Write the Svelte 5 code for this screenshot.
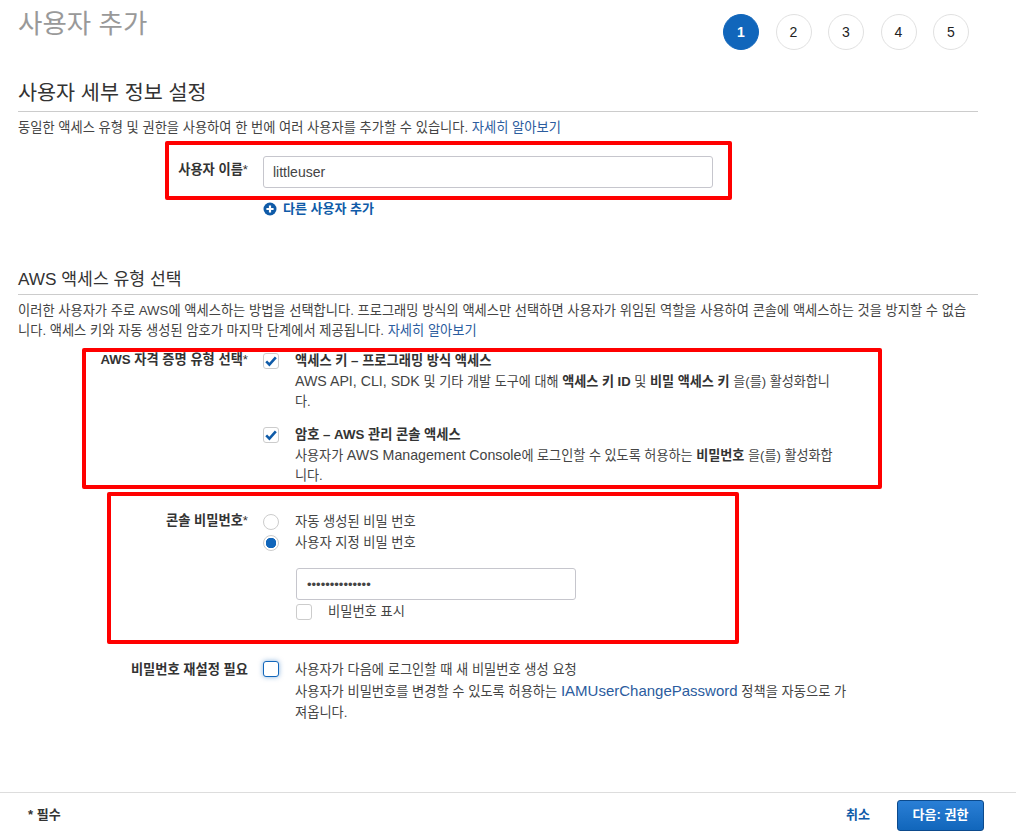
<script>
  let userName = 'littleuser'
  let password = 'passwordpasswo'
  const steps = [1, 2, 3, 4, 5]
</script>

<div class="page">
  <header class="top">
    <h1>사용자 추가</h1>
    <ol class="steps">
      {#each steps as step}
        <li class:current={step === 1}>{step}</li>
      {/each}
    </ol>
  </header>

  <section class="details">
    <h2>사용자 세부 정보 설정</h2>
    <p class="desc">동일한 액세스 유형 및 권한을 사용하여 한 번에 여러 사용자를 추가할 수 있습니다. <a href="#more">자세히 알아보기</a></p>

    <div class="row name-row">
      <div class="label">사용자 이름<span class="req">*</span></div>
      <input class="text name-input" type="text" value={userName} />
    </div>
    <a class="add-user" href="#add">
      <svg width="14" height="14" viewBox="0 0 14 14">
        <circle cx="7" cy="7" r="6.5" fill="#0f5ba8" />
        <path d="M7 3.4v7.2M3.4 7h7.2" stroke="#fff" stroke-width="2.2" />
      </svg>
      다른 사용자 추가
    </a>
  </section>

  <section class="access">
    <h2>AWS 액세스 유형 선택</h2>
    <p class="desc wide">이러한 사용자가 주로 AWS에 액세스하는 방법을 선택합니다. 프로그래밍 방식의 액세스만 선택하면 사용자가 위임된 역할을 사용하여 콘솔에 액세스하는 것을 방지할 수 없습니다. 액세스 키와 자동 생성된 암호가 마지막 단계에서 제공됩니다. <a href="#more">자세히 알아보기</a></p>

    <div class="row cred-row">
      <div class="label">AWS 자격 증명 유형 선택<span class="req">*</span></div>
      <div class="options">
        <div class="option">
          <span class="check">
            <svg width="14" height="12" viewBox="0 0 14 12"><path d="M2.2 6.4 5.4 9.6 11.8 2.4" fill="none" stroke="#0f5ba8" stroke-width="2.6" /></svg>
          </span>
          <div class="option-text">
            <strong>액세스 키 – 프로그래밍 방식 액세스</strong>
            <p><span class="en">AWS API, CLI, SDK</span> 및 기타 개발 도구에 대해 <b>액세스 키 ID</b> 및 <b>비밀 액세스 키</b> 을(를) 활성화합니다.</p>
          </div>
        </div>
        <div class="option">
          <span class="check">
            <svg width="14" height="12" viewBox="0 0 14 12"><path d="M2.2 6.4 5.4 9.6 11.8 2.4" fill="none" stroke="#0f5ba8" stroke-width="2.6" /></svg>
          </span>
          <div class="option-text">
            <strong>암호 – AWS 관리 콘솔 액세스</strong>
            <p>사용자가 <span class="en">AWS Management Console</span>에 로그인할 수 있도록 허용하는 <b>비밀번호</b> 을(를) 활성화합니다.</p>
          </div>
        </div>
      </div>
    </div>

    <div class="row pw-row">
      <div class="label">콘솔 비밀번호<span class="req">*</span></div>
      <div class="pw-options">
        <div class="radio-line"><span class="radio"></span>자동 생성된 비밀 번호</div>
        <div class="radio-line"><span class="radio on"></span>사용자 지정 비밀 번호</div>
        <input class="text pw-input" type="password" value={password} />
        <div class="show-pw"><span class="check"></span>비밀번호 표시</div>
      </div>
    </div>

    <div class="row reset-row">
      <div class="label">비밀번호 재설정 필요</div>
      <span class="check focused"></span>
      <div class="reset-text">
        <div>사용자가 다음에 로그인할 때 새 비밀번호 생성 요청</div>
        <p>사용자가 비밀번호를 변경할 수 있도록 허용하는 <a class="policy" href="#policy">IAMUserChangePassword</a> 정책을 자동으로 가져옵니다.</p>
      </div>
    </div>
  </section>

  <footer class="foot">
    <span class="required-note">* 필수</span>
    <a class="cancel" href="#cancel">취소</a>
    <button class="next" type="button">다음: 권한</button>
  </footer>

  <!-- red annotation boxes drawn over the form -->
  <div class="mark mark-name"></div>
  <div class="mark mark-cred"></div>
  <div class="mark mark-pw"></div>
</div>

<style>
  :global(body) {
    margin: 0;
    background: #fff;
  }

  .page {
    position: relative;
    width: 1016px;
    height: 837px;
    overflow: hidden;
    font-family: "Liberation Sans", "Noto Sans CJK KR", sans-serif;
    font-size: 13.25px;
    line-height: 20px;
    color: #444;
  }

  a {
    color: #2b5c9e;
    text-decoration: none;
  }

  p {
    margin: 0;
  }

  .en {
    font-size: 14.2px;
  }

  .policy {
    font-size: 15px;
  }

  .top {
    display: flex;
    justify-content: space-between;
    height: 63px;
    padding: 0 47px 0 18px;
  }

  h1 {
    margin: 0;
    padding-top: 6px;
    font-size: 26.5px;
    line-height: 36px;
    font-weight: 400;
    color: #999;
  }

  .steps {
    display: flex;
    gap: 16.5px;
    margin: 14px 0 0;
    padding: 0;
    list-style: none;
  }

  .steps li {
    box-sizing: border-box;
    width: 36px;
    height: 36px;
    border: 1px solid #e1e1e1;
    border-radius: 50%;
    text-align: center;
    font-size: 14px;
    line-height: 34px;
    color: #222;
  }

  .steps li.current {
    background: #1166bb;
    border-color: #1166bb;
    color: #fff;
    font-weight: 700;
  }

  h2 {
    margin: 0 38px 0 18px;
    border-bottom: 1px solid #ccc;
    font-weight: 400;
    color: #333;
  }

  .details {
    padding-top: 16px;
  }

  .details h2 {
    padding-bottom: 4px;
    font-size: 20.7px;
    line-height: 28px;
  }

  .access h2 {
    padding: 2px 0 1px;
    font-size: 17.2px;
    line-height: 28px;
  }

  .desc {
    margin: 6px 38px 0 18px;
    color: #444;
  }

  .row {
    display: grid;
    grid-template-columns: 248px 1fr;
    column-gap: 15px;
  }

  .label {
    text-align: right;
    font-weight: 700;
    color: #333;
    white-space: nowrap;
  }

  .req {
    font-weight: 400;
  }

  .text {
    box-sizing: border-box;
    height: 32px;
    padding: 0 9px;
    border: 1px solid #c6c6cd;
    border-radius: 3px;
    background: #fff;
    font: inherit;
    font-size: 14px;
    color: #444;
    outline: none;
  }

  .name-row {
    margin-top: 18px;
    align-items: center;
  }

  .name-row .label {
    margin-top: -5px;
  }

  .name-input {
    width: 450px;
  }

  .add-user {
    display: flex;
    align-items: center;
    gap: 6px;
    margin: 11px 0 0 263px;
    font-size: 13px;
    font-weight: 700;
    color: #0f5ba8;
  }

  .access {
    margin-top: 44px;
  }

  .desc.wide {
    width: 952px;
    margin-right: 0;
  }

  .cred-row {
    margin-top: 9px;
  }

  .options {
    display: flex;
    flex-direction: column;
    gap: 12px;
  }

  .option {
    display: grid;
    grid-template-columns: 32px 545px;
  }

  .option-text strong {
    display: block;
    line-height: 21px;
    color: #333;
  }

  .option-text p {
    line-height: 20px;
    font-size: 13.1px;
  }

  .option-text b {
    color: #333;
  }

  .check {
    box-sizing: border-box;
    display: flex;
    align-items: center;
    justify-content: center;
    width: 16px;
    height: 16px;
    margin-top: 3px;
    border: 1px solid #ccc;
    border-radius: 3px;
    background: #fff;
  }

  .pw-row {
    margin-top: 25px;
  }

  .radio-line {
    display: flex;
    align-items: center;
    height: 21px;
  }

  .radio {
    box-sizing: border-box;
    width: 16px;
    height: 16px;
    margin-right: 16px;
    border: 1px solid #ccc;
    border-radius: 50%;
    background: #fff;
  }

  .radio.on {
    background: radial-gradient(circle, #1166bb 0 5px, #fff 5.5px);
  }

  .pw-input {
    display: block;
    width: 280px;
    margin: 15px 0 0 33px;
    font-size: 13px;
    padding: 0 10px;
  }

  .show-pw {
    display: flex;
    align-items: center;
    margin: 2px 0 0 33px;
  }

  .show-pw .check {
    margin: 0 16px 0 0;
  }

  .reset-row {
    grid-template-columns: 248px 32px 570px;
    column-gap: 0;
    margin-top: 37px;
    line-height: 21px;
  }

  .reset-row .check {
    margin: 2px 0 0 15px;
  }

  .check.focused {
    border-color: #1166bb;
    box-shadow: 0 0 5px rgba(17, 102, 187, 0.5);
  }

  .reset-text {
    margin-left: 15px;
  }

  .foot {
    position: absolute;
    left: 0;
    right: 0;
    top: 792px;
    display: flex;
    align-items: center;
    height: 44px;
    padding: 0 32px 0 28px;
    border-top: 1px solid #ddd;
    font-size: 13px;
  }

  .required-note {
    font-weight: 700;
    color: #333;
  }

  .cancel {
    margin-left: auto;
    font-weight: 700;
    color: #0f5ba8;
  }

  .next {
    margin-left: 27px;
    width: 87px;
    height: 31px;
    padding: 0;
    border: 1px solid #0c4a8c;
    border-radius: 3px;
    background: linear-gradient(#2a7fd6, #1166bb);
    color: #fff;
    font: inherit;
    font-weight: 700;
  }

  .mark {
    position: absolute;
    box-sizing: border-box;
    border: 4px solid #f00;
    border-radius: 2px;
    pointer-events: none;
  }

  .mark-name {
    left: 165px;
    top: 141px;
    width: 567px;
    height: 59px;
  }

  .mark-cred {
    left: 82px;
    top: 348px;
    width: 800px;
    height: 141px;
  }

  .mark-pw {
    left: 107px;
    top: 492px;
    width: 632px;
    height: 152px;
  }
</style>
